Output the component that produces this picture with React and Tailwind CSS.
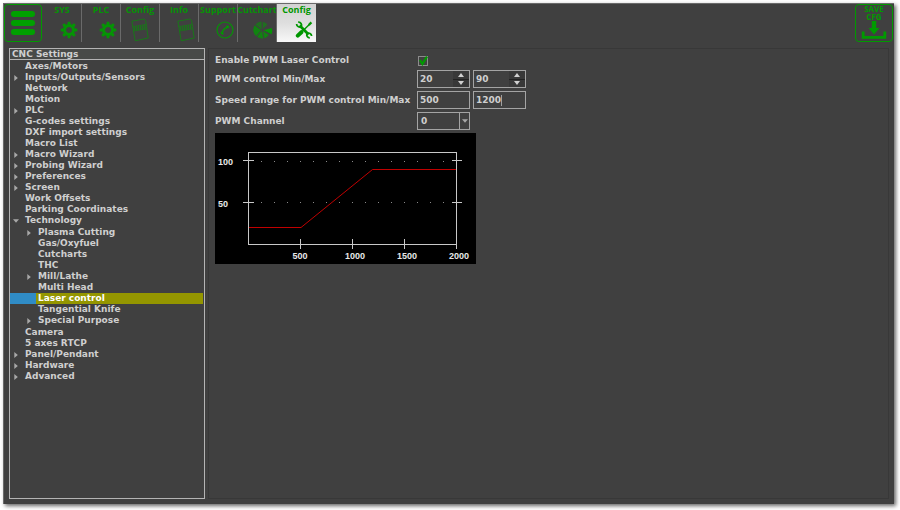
import React, { useState } from 'react';

const tree = [
  { label: 'Axes/Motors' },
  { label: 'Inputs/Outputs/Sensors', closed: true },
  { label: 'Network' },
  { label: 'Motion' },
  { label: 'PLC', closed: true },
  { label: 'G-codes settings' },
  { label: 'DXF import settings' },
  { label: 'Macro List' },
  { label: 'Macro Wizard', closed: true },
  { label: 'Probing Wizard', closed: true },
  { label: 'Preferences', closed: true },
  { label: 'Screen', closed: true },
  { label: 'Work Offsets' },
  { label: 'Parking Coordinates' },
  {
    label: 'Technology',
    children: [
      { label: 'Plasma Cutting', closed: true },
      { label: 'Gas/Oxyfuel' },
      { label: 'Cutcharts' },
      { label: 'THC' },
      { label: 'Mill/Lathe', closed: true },
      { label: 'Multi Head' },
      { label: 'Laser control' },
      { label: 'Tangential Knife' },
      { label: 'Special Purpose', closed: true },
    ],
  },
  { label: 'Camera' },
  { label: '5 axes RTCP' },
  { label: 'Panel/Pendant', closed: true },
  { label: 'Hardware', closed: true },
  { label: 'Advanced', closed: true },
];

const GearIcon = () => (
  <svg viewBox="0 0 18 18" className="w-[18px] h-[18px]">
    <circle cx="9" cy="9" r="4.5" fill="none" stroke="currentColor" strokeWidth="3" />
    {[0, 45, 90, 135, 180, 225, 270, 315].map((a) => (
      <path key={a} d="M7.3 3.8 L7.8 0.7 H10.2 L10.7 3.8 Z" fill="currentColor" transform={`rotate(${a} 9 9)`} />
    ))}
  </svg>
);

const CardIcon = () => (
  <svg viewBox="0 0 18 24" className="w-[18px] h-6" fill="none" stroke="currentColor" strokeWidth="1" opacity="0.65">
    <path d="M0.9 3.2 L13 1 L14.6 2.6 L17.2 20 L4.2 22.8 Z" />
    <path d="M1.8 8.6 L15.4 6.4 M2.6 13 L16 10.8" strokeWidth="0.8" />
    <path d="M3.6 8.6 v4 M5.6 8.3 v4 M7.6 8 v4 M9.6 7.6 v4 M11.6 7.3 v4 M13.6 7 v4" strokeWidth="1.2" />
  </svg>
);

const PhoneIcon = () => (
  <svg viewBox="0 0 18 18" className="w-[18px] h-[18px]" fill="none" stroke="currentColor">
    <circle cx="9" cy="9" r="8" strokeWidth="1.2" />
    <path d="M6 12.4 Q6.6 8 11.8 6" strokeWidth="1.5" />
    <path d="M5 11.2 L7.2 13.2 M10.8 4.6 L12.6 7" strokeWidth="2.2" />
  </svg>
);

const PieIcon = () => (
  <svg viewBox="0 0 20 18" className="w-5 h-[18px]" fill="currentColor">
    <path d="M8.6 8.4 L2.4 3.4 A8.4 8.4 0 0 1 8.6 0.6 Z" opacity="0.55" />
    <path d="M9.8 8 V0.8 A8 8 0 0 1 14.4 3.6 Z" opacity="0.55" />
    <path d="M8 9.2 L1.6 4.2 A8.4 8.4 0 0 0 3.2 15.2 Z" opacity="0.8" />
    <path d="M8.8 9.8 L4 15.8 A8 8 0 0 0 10.4 17.4 Z" opacity="0.8" />
    <path d="M9.8 10 L11.4 17.2 A8 8 0 0 0 15.8 14 Z" opacity="0.8" />
    <path d="M10.6 9.2 L18.8 7 A9 9 0 0 1 18.6 13.2 Z" />
  </svg>
);

const ToolsIcon = () => (
  <svg viewBox="0 0 18 18" className="w-[18px] h-[18px]" fill="none" stroke="currentColor">
    <path d="M4.6 4.6 L13.6 13.4" strokeWidth="2.8" />
    <path d="M1.6 3 A3 3 0 0 0 6.6 5.2 M3.2 1.2 A3 3 0 0 1 6.2 5.6" strokeWidth="1.8" />
    <path d="M16.6 15 A3 3 0 0 0 12 12.6 M14.8 16.8 A3 3 0 0 1 12 12.6" strokeWidth="1.8" />
    <path d="M6.4 11.2 L14.6 3.2" strokeWidth="1.4" />
    <path d="M13.8 4 L16.4 1.4" strokeWidth="2.2" />
    <path d="M2.8 14.6 L6.4 11.2" strokeWidth="4" strokeLinecap="round" />
  </svg>
);

const tabs = [
  { id: 'sys', label: 'SYS', icon: GearIcon, align: 'justify-end pr-[3px]' },
  { id: 'plc', label: 'PLC', icon: GearIcon, align: 'justify-end pr-[3px]' },
  { id: 'config', label: 'Config', icon: CardIcon, align: 'justify-center' },
  { id: 'info', label: 'Info', icon: CardIcon, align: 'justify-end pr-[3px]' },
  { id: 'support', label: 'Support', icon: PhoneIcon, align: 'justify-end pr-[3px]' },
  { id: 'cutchart', label: 'Cutchart', icon: PieIcon, align: 'justify-end pr-[3px]' },
  { id: 'settings', label: 'Config', icon: ToolsIcon, align: 'justify-end pr-[3px]' },
];

const Toolbar = () => {
  const [active, setActive] = useState('settings');

  return (
    <header className="flex justify-between pr-px pb-px text-[#009a00] font-['Open_Sans',sans-serif] font-bold">
      <div className="flex">
        <button aria-label="Menu" className="w-[38px] h-[38px] mr-px rounded-sm border border-[#009a00] flex flex-col items-center justify-center gap-[3px]">
          <span className="w-6 h-[6px] rounded-full bg-[#00a000]"></span>
          <span className="w-6 h-[6px] rounded-full bg-[#00a000]"></span>
          <span className="w-6 h-[6px] rounded-full bg-[#00a000]"></span>
        </button>
        <nav className="flex">
          {tabs.map(({ id, label, icon: Icon, align }) => (
            <button
              key={id}
              onClick={() => setActive(id)}
              className={`w-[39px] h-[38px] flex flex-col items-center overflow-hidden text-[9px] leading-[12px] ${active === id ? 'bg-linear-to-b from-[#d2d2d2] via-[#dedede] to-[#f8f8f8] text-[#009600]' : 'border-r border-[#6a6a6a] text-[#059405]'}`}
            >
              <span className="whitespace-nowrap">{label}</span>
              <span className={`w-full h-[26px] flex items-center pt-[2px] ${align}`}>
                <Icon />
              </span>
            </button>
          ))}
        </nav>
      </div>
      <button className="w-[38px] h-[38px] rounded-sm border border-[#009a00] flex flex-col items-center text-[8px] leading-[8px]">
        <span>SAVE</span>
        <span>CFG</span>
        <svg viewBox="0 0 26 20" className="w-[26px] h-5">
          <path d="M10.8 0 H15.2 V7 H18.4 L13 13.6 L7.6 7 H10.8 Z" fill="currentColor" />
          <path d="M2.2 10.5 V16.4 H23.8 V10.5" fill="none" stroke="currentColor" strokeWidth="2.8" />
        </svg>
      </button>
    </header>
  );
};

const Arrow = ({ node }) => (
  <span className="w-[13px] pr-px shrink-0 flex items-center justify-center">
    {node.closed && (
      <svg viewBox="0 0 4 6" className="w-1 h-[6px]"><path d="M0.3 0 L3.8 3 L0.3 6 Z" fill="#a8a8a8" /></svg>
    )}
    {node.children && (
      <svg viewBox="0 0 6 4" className="w-[6px] h-1"><path d="M0 0.3 L6 0.3 L3 3.8 Z" fill="#a8a8a8" /></svg>
    )}
  </span>
);

const TreeItem = ({ node, nested, selected, onSelect }) => {
  const isSelected = selected === node.label;
  return (
    <li>
      <button
        onClick={() => onSelect(node.label)}
        className={`w-full h-[11px] flex items-stretch text-left ${isSelected ? 'bg-[#308cc6] text-white' : ''}`}
      >
        {nested && <span className="w-[13px] shrink-0"></span>}
        <Arrow node={node} />
        <span className={`flex-1 whitespace-nowrap pl-[2px] ${isSelected ? 'bg-[#949600]' : ''}`}>{node.label}</span>
      </button>
      {node.children && (
        <ul className="py-px">
          {node.children.map((child) => (
            <TreeItem key={child.label} node={child} nested selected={selected} onSelect={onSelect} />
          ))}
        </ul>
      )}
    </li>
  );
};

const Sidebar = () => {
  const [selected, setSelected] = useState('Laser control');

  return (
    <aside className="w-[196px] shrink-0 border border-[#b4b4b4] leading-[11px]">
      <h2 className="h-[11px] overflow-hidden border-b border-[#b4b4b4] bg-[#484a48] px-[2px]">CNC Settings</h2>
      <ul className="pt-px pr-px">
        {tree.map((node) => (
          <TreeItem key={node.label} node={node} selected={selected} onSelect={setSelected} />
        ))}
      </ul>
    </aside>
  );
};

const SpinBox = ({ id, label, value, onChange }) => (
  <div className="w-[53px] h-[18px] flex border border-[#a4a4a4]">
    <input
      id={id}
      aria-label={label}
      type="number"
      value={value}
      onChange={(e) => onChange(Number(e.target.value))}
      className="w-0 flex-1 pl-[2px] bg-transparent outline-none [appearance:textfield] [&::-webkit-inner-spin-button]:appearance-none"
    />
    <div className="w-4 flex flex-col bg-[#383838]">
      <button aria-label="Increase" onClick={() => onChange(value + 1)} className="flex-1 flex items-center justify-center border-b border-[#222]">
        <svg viewBox="0 0 6 4" className="w-[6px] h-1"><path d="M0 4 L3 0 L6 4 Z" fill="#d0d0d0" /></svg>
      </button>
      <button aria-label="Decrease" onClick={() => onChange(value - 1)} className="flex-1 flex items-center justify-center">
        <svg viewBox="0 0 6 4" className="w-[6px] h-1"><path d="M0 0 L3 4 L6 0 Z" fill="#d0d0d0" /></svg>
      </button>
    </div>
  </div>
);

const PwmChart = () => (
  <svg viewBox="0 0 261 131" className="w-[261px] h-[131px] bg-black" role="img" aria-label="PWM against speed">
    <g stroke="#c8c8c8" strokeWidth="1" fill="none">
      <rect x="33.5" y="19.5" width="208" height="92" />
      <path d="M28 27.5 H39 M28 69.5 H39 M237 27.5 H247 M237 69.5 H247" />
      <path d="M85.5 106 V116 M137.5 106 V116 M189.5 106 V116 M241.5 106 V116" />
      <path d="M46 28.5 H237 M46 69.5 H237" strokeDasharray="1 12" stroke="#8a8a8a" />
    </g>
    <path d="M34 94.5 H86 L157.5 36.5 H241" fill="none" stroke="#c00000" strokeWidth="1" />
    <g fill="#e8e8e8" className="font-['Liberation_Sans',sans-serif] text-[9px] font-bold">
      <text x="3" y="32">100</text>
      <text x="3" y="74">50</text>
      <text x="85" y="126" textAnchor="middle">500</text>
      <text x="140" y="126" textAnchor="middle">1000</text>
      <text x="192" y="126" textAnchor="middle">1500</text>
      <text x="244" y="126" textAnchor="middle">2000</text>
    </g>
  </svg>
);

const LaserControl = () => {
  const [enabled, setEnabled] = useState(true);
  const [pwmMin, setPwmMin] = useState(20);
  const [pwmMax, setPwmMax] = useState(90);
  const [speedMin, setSpeedMin] = useState('500');
  const [speedMax, setSpeedMax] = useState('1200');
  const [channel, setChannel] = useState('0');

  return (
    <main className="flex-1 min-w-0 border border-[#383838] px-[6px] pt-[5px]">
      <div className="grid grid-cols-[202px_1fr] gap-y-[3px] items-center">
        <label htmlFor="enable" className="whitespace-nowrap">Enable PWM Laser Control</label>
        <div className="h-[13px] flex items-center pl-px">
          <span className="relative w-[10px] h-[10px] flex">
            <input
              id="enable"
              type="checkbox"
              checked={enabled}
              onChange={(e) => setEnabled(e.target.checked)}
              className="appearance-none w-[10px] h-[10px] border border-[#8c8c8c]"
            />
            {enabled && (
              <svg viewBox="0 0 10 10" className="absolute inset-0 pointer-events-none">
                <path d="M2 4 L4.4 8 L9 0.6" fill="none" stroke="#009a00" strokeWidth="2.2" />
              </svg>
            )}
          </span>
        </div>

        <label htmlFor="pwm-min" className="whitespace-nowrap">PWM control Min/Max</label>
        <div className="flex gap-[3px]">
          <SpinBox id="pwm-min" label="PWM control min" value={pwmMin} onChange={setPwmMin} />
          <SpinBox label="PWM control max" value={pwmMax} onChange={setPwmMax} />
        </div>

        <label htmlFor="speed-min" className="whitespace-nowrap">Speed range for PWM control Min/Max</label>
        <div className="flex gap-[3px]">
          <input
            id="speed-min"
            value={speedMin}
            onChange={(e) => setSpeedMin(e.target.value)}
            className="w-[53px] h-[18px] pl-[2px] border border-[#a4a4a4] bg-transparent outline-none"
          />
          <span className="relative">
            <input
              aria-label="Speed range max"
              value={speedMax}
              onChange={(e) => setSpeedMax(e.target.value)}
              className="w-[53px] h-[18px] pl-[2px] border border-[#a4a4a4] bg-transparent outline-none caret-transparent"
            />
            <span className="absolute left-7 top-1 w-px h-[11px] bg-[#a0a0a0]"></span>
          </span>
        </div>

        <label htmlFor="channel" className="whitespace-nowrap">PWM Channel</label>
        <div className="relative w-[53px] flex">
          <select
            id="channel"
            value={channel}
            onChange={(e) => setChannel(e.target.value)}
            className="appearance-none w-full h-[18px] pl-[3px] border border-[#a4a4a4] bg-[#404040] outline-none"
          >
            <option>0</option>
            <option>1</option>
            <option>2</option>
          </select>
          <span className="absolute right-0 inset-y-0 w-[11px] border border-[#a4a4a4] flex items-center justify-center pointer-events-none">
            <svg viewBox="0 0 6 4" className="w-[6px] h-1"><path d="M0 0.3 H6 L3 3.8 Z" fill="#a8a8a8" /></svg>
          </span>
        </div>
      </div>
      <div className="pt-[3px]">
        <PwmChart />
      </div>
    </main>
  );
};

const App = () => (
  <div className="min-h-screen bg-white flex pl-[3px] pt-[3px] pr-[6px] pb-[6px]">
    <div className="flex-1 flex flex-col bg-[#404040] border-t border-l border-[#6a6a6a] shadow-[2px_2px_4px_rgba(0,0,0,0.6)] font-['DejaVu_Sans',sans-serif] text-[9px] leading-[13px] font-bold text-[#cfcfcf]">
      <Toolbar />
      <div className="flex-1 flex gap-[3px] px-[5px] pt-[5px] pb-[5px]">
        <Sidebar />
        <LaserControl />
      </div>
    </div>
  </div>
);

export default App;
